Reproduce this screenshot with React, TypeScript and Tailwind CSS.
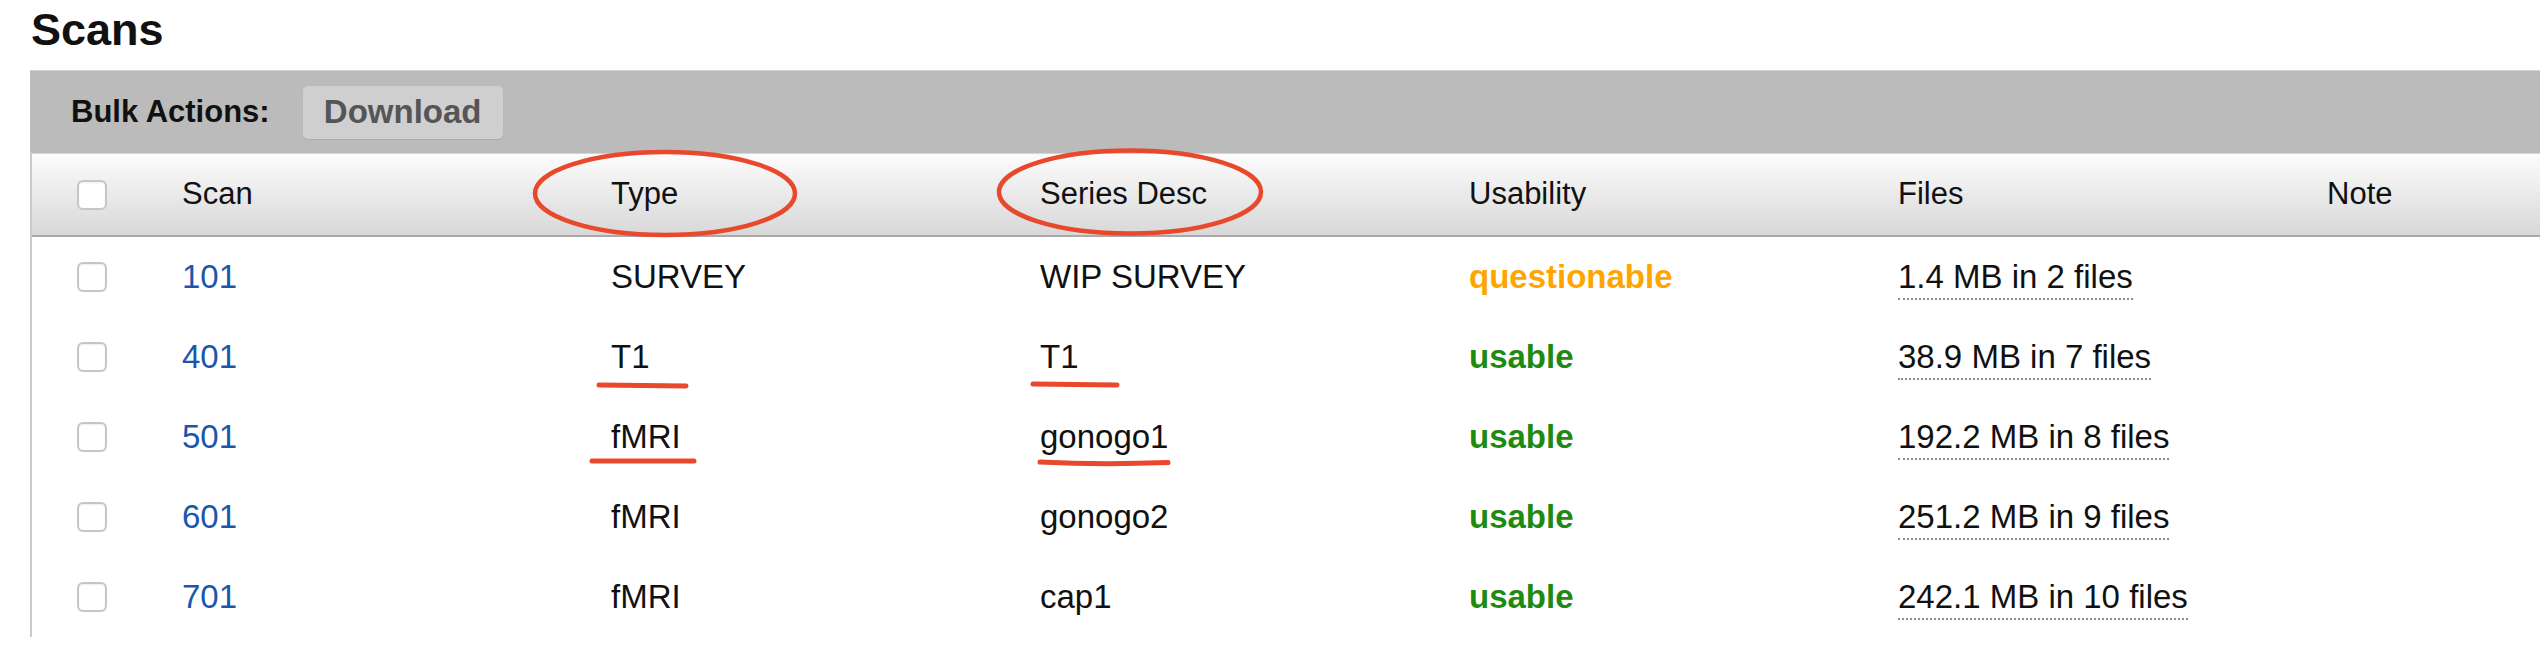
import React from 'react';

type Scan = {
  id: string;
  type: string;
  desc: string;
  usability: 'usable' | 'questionable';
  files: string;
};

const scans: Scan[] = [
  { id: '101', type: 'SURVEY', desc: 'WIP SURVEY', usability: 'questionable', files: '1.4 MB in 2 files' },
  { id: '401', type: 'T1', desc: 'T1', usability: 'usable', files: '38.9 MB in 7 files' },
  { id: '501', type: 'fMRI', desc: 'gonogo1', usability: 'usable', files: '192.2 MB in 8 files' },
  { id: '601', type: 'fMRI', desc: 'gonogo2', usability: 'usable', files: '251.2 MB in 9 files' },
  { id: '701', type: 'fMRI', desc: 'cap1', usability: 'usable', files: '242.1 MB in 10 files' },
];

const cols = 'grid grid-cols-[150px_repeat(6,429px)]';

function Checkbox() {
  return (
    <span className="block w-[30px] h-[30px] rounded-[6px] border-2 border-[#c6c6c6] bg-white shadow-[inset_0_1px_2px_rgba(0,0,0,0.08)]" />
  );
}

// red pen marks drawn over the screenshot
function Annotations() {
  return (
    <svg className="absolute inset-0 pointer-events-none" width="2540" height="656" viewBox="0 0 2540 656">
      <g fill="none" stroke="#e8482b" strokeLinecap="round">
        <ellipse cx="665" cy="193.5" rx="130" ry="41.5" strokeWidth="4.5" />
        <ellipse cx="1130" cy="192" rx="131" ry="41.5" strokeWidth="4.5" />
        <path d="M599 385 L686 386" strokeWidth="5" />
        <path d="M1033 384 L1117 385" strokeWidth="5" />
        <path d="M592 461 L694 461" strokeWidth="5" />
        <path d="M1040 462 Q1100 465 1168 462.5" strokeWidth="5" />
      </g>
    </svg>
  );
}

export default function App() {
  return (
    <div className="relative w-[2540px] h-[656px] overflow-hidden bg-white text-[#111] font-['Liberation_Sans',Arial,sans-serif]">
      {/* Title */}
      <div className="h-[70px] pl-[31px] pt-[7px]">
        <h2 className="text-[45px] font-bold leading-none">Scans</h2>
      </div>

      <div className="ml-[30px] border-l-2 border-[#cacaca]">
        {/* Bulk actions bar */}
        <div className="h-[84px] -ml-[2px] pl-[41px] flex items-center gap-[33px] bg-[#bbbbbb] border-t border-[#d2d2d2] border-b border-b-[#d6d6d6]">
          <span className="text-[31px] font-bold">Bulk Actions:</span>
          <button className="w-[200px] h-[53px] rounded-[5px] bg-[#cfcfcf] text-[33px] font-bold text-[#555] shadow-[0_1px_1px_rgba(0,0,0,0.08)]">
            Download
          </button>
        </div>

        {/* Header */}
        <div className={`${cols} h-[83px] items-center bg-linear-to-b from-[#fcfcfc] to-[#d8d8d8] border-b-2 border-[#a9a9a9] text-[31px]`}>
          <div className="pl-[45px]">
            <Checkbox />
          </div>
          <div>Scan</div>
          <div>Type</div>
          <div>Series Desc</div>
          <div>Usability</div>
          <div>Files</div>
          <div>Note</div>
        </div>

        {/* Rows */}
        {scans.map((s) => (
          <div key={s.id} className={`${cols} h-[80px] items-center text-[33px]`}>
            <div className="pl-[45px]">
              <Checkbox />
            </div>
            <div className="text-[#1b56ad]">{s.id}</div>
            <div>{s.type}</div>
            <div>{s.desc}</div>
            <div className={`font-bold ${s.usability === 'usable' ? 'text-[#1e8a12]' : 'text-[#ffa500]'}`}>
              {s.usability}
            </div>
            <div>
              <span className="border-b-2 border-dotted border-[#8c8c8c] pb-[3px]">{s.files}</span>
            </div>
            <div />
          </div>
        ))}
      </div>

      <Annotations />
    </div>
  );
}
